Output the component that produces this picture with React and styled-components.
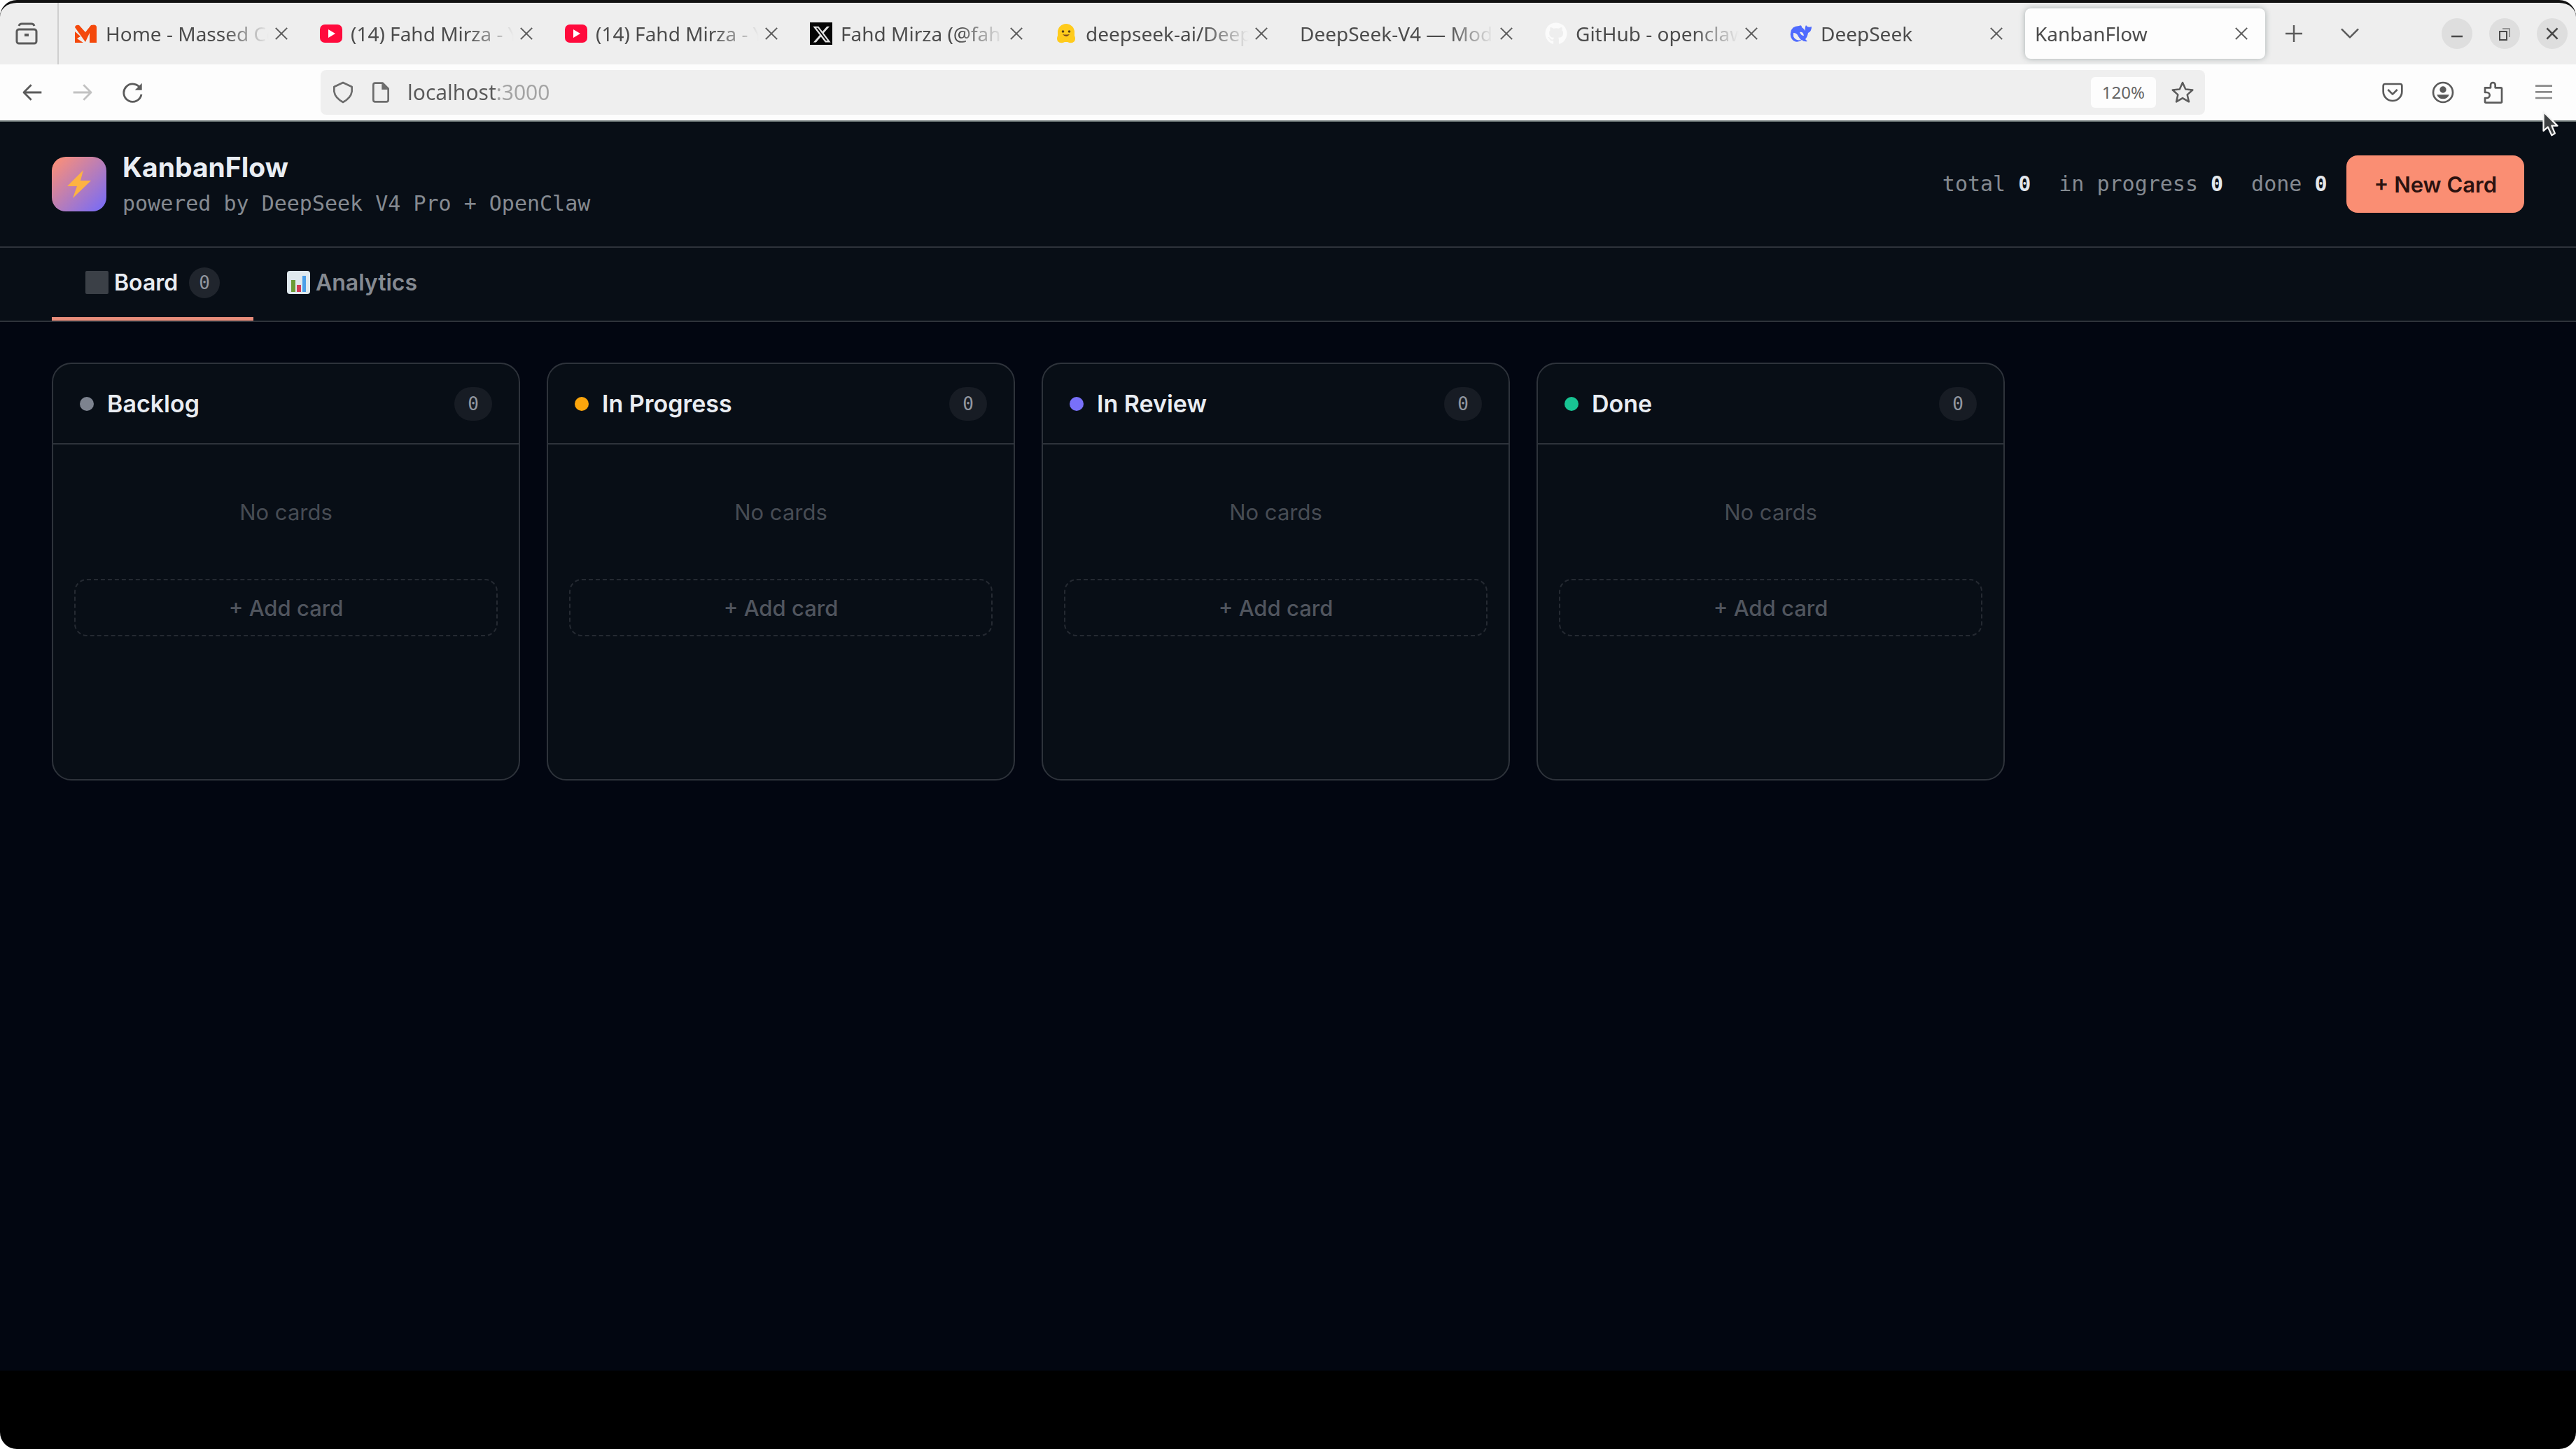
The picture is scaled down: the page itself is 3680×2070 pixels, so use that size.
import React from "react";
import styled, { createGlobalStyle } from "styled-components";
import { FaGithub, FaXTwitter } from "react-icons/fa6";

const sans = `Inter, "Noto Sans", sans-serif`;
const mono = `"DejaVu Sans Mono", "Liberation Mono", monospace`;
const chromeFont = `"Noto Sans", "Open Sans", sans-serif`;

const GlobalStyle = createGlobalStyle`
  *, *::before, *::after { box-sizing: border-box; }
  html, body { margin: 0; background: #ffffff; }
  button, input { font: inherit; color: inherit; margin: 0; padding: 0; border: 0; background: none; }
  h1, h2, p, ul { margin: 0; padding: 0; font-weight: inherit; font-size: inherit; }
  svg { display: block; flex: none; }
`;

const Window = styled.div`
  display: flex;
  flex-direction: column;
  min-height: 100vh;
  overflow: hidden;
  border-top: 4px solid #111111;
  border-radius: 24px;
  background: #000000;
  position: relative;
`;

/* ---------- browser chrome ---------- */

const TabStrip = styled.div`
  display: flex;
  align-items: center;
  height: 88px;
  padding-right: 12px;
  background: #eeeeee;
  color: #4c4c4c;
  font: 400 28px/40px ${chromeFont};
`;

const SidebarSlot = styled.div`
  display: flex;
  align-items: center;
  align-self: stretch;
  padding: 0 27px 0 21px;
  margin-right: 9px;
  border-right: 2px solid #cfcfcf;
`;

const TabList = styled.div`
  display: flex;
  flex: 0 1 3143px;
  min-width: 0;
  gap: 7px;
  margin-right: 5px;
`;

const BrowserTab = styled.div`
  display: flex;
  align-items: center;
  flex: 1 1 0;
  min-width: 0;
  height: 72px;
  padding: 0 16px 0 14px;
  border-radius: 8px;
  background: ${(p) => (p.$active ? "#fdfdfd" : "transparent")};
  box-shadow: ${(p) => (p.$active ? "0 0 8px rgba(60, 80, 80, 0.4)" : "none")};
`;

const TabTitle = styled.button`
  display: flex;
  align-items: center;
  gap: 12px;
  flex: 1;
  min-width: 0;
  text-align: left;
`;

const TabText = styled.span`
  flex: 1;
  min-width: 0;
  overflow: hidden;
  white-space: nowrap;
  mask-image: linear-gradient(to left, transparent 0, #000 64px);
`;

const IconButton = styled.button`
  display: flex;
  align-items: center;
  justify-content: center;
  width: ${(p) => p.$w || 72}px;
  height: 64px;
  color: ${(p) => p.$color || "#5b5b5b"};
`;

const StripActions = styled.div`
  display: flex;
  gap: 8px;
`;

const WindowControls = styled.div`
  display: flex;
  gap: 24px;
  margin-left: auto;
`;

const RoundButton = styled.button`
  display: flex;
  align-items: center;
  justify-content: center;
  width: 44px;
  height: 44px;
  border-radius: 50%;
  background: #dedede;
  color: #4a4a4a;
`;

const Toolbar = styled.div`
  display: flex;
  align-items: center;
  height: 82px;
  padding: 0 10px;
  background: #fdfdfd;
  border-bottom: 2px solid #667070;
`;

const AddressBar = styled.div`
  display: flex;
  align-items: center;
  flex: 1;
  min-width: 0;
  height: 64px;
  margin: 0 232px;
  padding: 0 16px;
  gap: 22px;
  border-radius: 8px;
  background: #efefef;
  color: #6c6c6c;
`;

const AddressInput = styled.input`
  flex: 1;
  min-width: 0;
  height: 44px;
  font: 400 30px/44px ${chromeFont};
  color: #5a5a5a;
  background: linear-gradient(90deg, #5a5a5a 126px, #a4a4a4 126px);
  background-clip: text;
  -webkit-background-clip: text;
  -webkit-text-fill-color: transparent;
  outline: none;
`;

const ZoomButton = styled.button`
  height: 44px;
  padding: 0 16px;
  border-radius: 6px;
  background: #fdfdfd;
  color: #666666;
  font: 400 24px/44px ${chromeFont};
`;

/* ---------- page ---------- */

const Page = styled.main`
  display: flex;
  flex-direction: column;
  flex: 1;
  background: #020611;
  font-family: ${sans};
`;

const PageHeader = styled.header`
  display: flex;
  align-items: center;
  justify-content: space-between;
  padding: 37px 74px;
  border-bottom: 2px solid #2e333b;
  background: #080e16;
`;

const Brand = styled.div`
  display: flex;
  align-items: center;
  gap: 23px;
`;

const Logo = styled.div`
  display: flex;
  align-items: center;
  justify-content: center;
  width: 78px;
  height: 78px;
  border-radius: 20px;
  background: linear-gradient(135deg, #fb8f78 5%, #796cf5 95%);
`;

const Title = styled.h1`
  font-size: 39px;
  font-weight: 700;
  line-height: 56px;
  color: #e9edf3;
`;

const Subtitle = styled.p`
  font: 400 30px/48px ${mono};
  color: #858a91;
`;

const HeaderSide = styled.div`
  display: flex;
  align-items: center;
  gap: 28px;
`;

const Stats = styled.div`
  display: flex;
  gap: 40px;
  font: 400 30px/48px ${mono};
  color: #858a91;

  strong {
    color: #e3e7ec;
    font-weight: 700;
  }
`;

const PrimaryButton = styled.button`
  height: 82px;
  padding: 0 39px;
  border-radius: 16px;
  background: #fa8e73;
  color: #2b1210;
  font-size: 31px;
  font-weight: 600;
`;

const Views = styled.nav`
  display: flex;
  padding: 0 74px;
  border-bottom: 2px solid #2e333b;
  background: #080e16;
`;

const ViewTab = styled.button`
  display: flex;
  align-items: center;
  height: 104px;
  padding: 0 48px;
  gap: 8px;
  border-bottom: 5px solid ${(p) => (p.$active ? "#e88d7b" : "transparent")};
  color: ${(p) => (p.$active ? "#e9edf3" : "#858a91")};
  font-size: 32px;
  font-weight: 600;
`;

const Count = styled.span`
  padding: 0 ${(p) => (p.$wide ? 19 : 14)}px;
  margin-left: 8px;
  border-radius: 24px;
  background: ${(p) => (p.$wide ? "#171c24" : "#20252d")};
  color: #9297a0;
  font: 400 26px/${(p) => (p.$wide ? 48 : 44)}px ${mono};
`;

const Board = styled.section`
  display: flex;
  align-items: flex-start;
  flex: 1;
  gap: 38px;
  padding: 58px 74px;
`;

const Column = styled.article`
  flex: 0 1 669px;
  min-width: 0;
  min-height: 597px;
  border: 2px solid #2e333b;
  border-radius: 28px;
  background: #080e16;
`;

const ColumnHeader = styled.header`
  display: flex;
  align-items: center;
  height: 115px;
  padding: 0 38px;
  gap: 19px;
  border-bottom: 2px solid #2e333b;
`;

const Dot = styled.span`
  width: 20px;
  height: 20px;
  border-radius: 50%;
  background: ${(p) => p.$color};
`;

const ColumnTitle = styled.h2`
  flex: 1;
  font-size: 34px;
  font-weight: 600;
  line-height: 48px;
  color: #e9edf3;
`;

const ColumnBody = styled.div`
  display: flex;
  flex-direction: column;
  gap: 28px;
  padding: 30px;
`;

const Empty = styled.p`
  padding: 46px 0;
  font-size: 31px;
  line-height: 42px;
  text-align: center;
  color: #474c54;
`;

const AddButton = styled.button`
  height: 82px;
  border: 2px dashed #252a32;
  border-radius: 18px;
  color: #50555e;
  font-size: 31px;
  font-weight: 500;
`;

const BottomStrip = styled.div`
  height: 112px;
`;

const Pointer = styled.svg`
  position: absolute;
  top: 152px;
  right: 22px;
`;

/* ---------- drawings ---------- */

const Line = ({ size = 32, w = 2, children, ...rest }) => (
  <svg width={size} height={size} viewBox="0 0 24 24" fill="none" stroke="currentColor" strokeWidth={w} strokeLinejoin="round" aria-hidden="true" {...rest}>
    {children}
  </svg>
);

const Massed = () => (
  <svg width="32" height="26" viewBox="0 0 32 26" aria-hidden="true">
    <path fill="#f4480b" d="M0 4 Q1 0 6 1 L15 11 L23 1 Q31 -1 31 4 V26 H21 V12 L15 25 Z M0 10 L8 17 L3 20 L12 26 H0 Z" />
  </svg>
);

const YouTube = () => (
  <svg width="32" height="26" viewBox="0 0 32 26" aria-hidden="true">
    <rect width="32" height="26" rx="7" fill="#ff0a3c" />
    <path d="M12 7 L22 13 L12 19 Z" fill="#fff" />
  </svg>
);

const XMark = () => (
  <svg width="32" height="32" viewBox="0 0 32 32" aria-hidden="true">
    <rect width="32" height="32" fill="#050505" />
    <FaXTwitter x="3" y="3" width="26" height="26" color="#e2e2e2" />
  </svg>
);

const Hugging = () => (
  <svg width="32" height="28" viewBox="0 0 32 28" aria-hidden="true">
    <path d="M4 25 Q2 21 4 17 V12 A12 12 0 0 1 28 12 V17 Q30 21 28 25 Q24 29 18 26 H14 Q8 29 4 25 Z" fill="#ffcb1c" />
    <circle cx="11.500" cy="11" r="1.800" fill="#564018" />
    <circle cx="20.500" cy="11" r="1.800" fill="#564018" />
    <path d="M11 15 Q16 21 21 15 Q16 16 11 15 Z" fill="#7a4a1c" />
  </svg>
);

const Whale = () => (
  <svg width="32" height="26" viewBox="0 0 32 26" aria-hidden="true">
    <path d="M1 12 Q2 2 13 2 Q17 0 17 4 Q20 6 22 9 Q21 4 23 1 Q25 5 31 3 Q31 10 26 12 Q25 18 22 21 L25 24 Q20 25 17 22 Q9 28 3 21 Q0 17 1 12 Z" fill="#4f6bfe" />
    <path d="M5 12 Q10 12 12 17 Q14 20 16 22 Q8 24 5 17 Z M14 11 Q19 10 20 16 Q16 16 14 11 Z" fill="#eeeeee" />
  </svg>
);

const CloseIcon = ({ size = 28 }) => (
  <Line size={size} w={1.7}><path d="M5 5 L19 19 M19 5 L5 19" /></Line>
);

const Bolt = () => (
  <svg width="36" height="42" viewBox="0 0 36 42" aria-hidden="true">
    <path d="M24 1 L1 24 H15 L9 41 L35 16 H20 Z" fill="#fdb343" />
  </svg>
);

const BoardIcon = () => (
  <svg width="33" height="33" viewBox="0 0 33 33" aria-hidden="true">
    <rect width="33" height="33" rx="2" fill="#3b4047" />
  </svg>
);

const ChartIcon = () => (
  <svg width="33" height="33" viewBox="0 0 33 33" aria-hidden="true">
    <rect width="33" height="33" rx="4" fill="#dfe9ee" />
    <rect x="6" y="13" width="6" height="17" fill="#6c9b35" />
    <rect x="14" y="20" width="6" height="10" fill="#d23b56" />
    <rect x="22" y="7" width="5" height="23" fill="#4b9fe8" />
  </svg>
);

const browserTabs = [
  { title: "Home - Massed Co", icon: <Massed /> },
  { title: "(14) Fahd Mirza - Y", icon: <YouTube /> },
  { title: "(14) Fahd Mirza - Y", icon: <YouTube /> },
  { title: "Fahd Mirza (@fah", icon: <XMark /> },
  { title: "deepseek-ai/Deep", icon: <Hugging /> },
  { title: "DeepSeek-V4 — Mod" },
  { title: "GitHub - openclaw", icon: <FaGithub size={32} color="#fbfbfb" /> },
  { title: "DeepSeek", icon: <Whale /> },
  { title: "KanbanFlow", active: true },
];

const stats = [["total", 0], ["in progress", 0], ["done", 0]];

const columns = [
  { name: "Backlog", color: "#7d838f" },
  { name: "In Progress", color: "#fba50c" },
  { name: "In Review", color: "#7870fa" },
  { name: "Done", color: "#18c493" },
];

function BrowserChrome() {
  return (
    <>
      <TabStrip>
        <SidebarSlot>
          <IconButton $w={34} aria-label="Recent browsing">
            <svg width="34" height="34" viewBox="0 0 34 34" fill="none" stroke="currentColor" strokeWidth="3" aria-hidden="true">
              <rect x="3" y="11" width="28" height="20" rx="3" />
              <path d="M6 6 Q7 3 10 3 H24 Q27 3 28 6" />
              <path d="M14 19 H20" strokeWidth="4" />
            </svg>
          </IconButton>
        </SidebarSlot>
        <TabList>
          {browserTabs.map((tab, i) => (
            <BrowserTab key={i} $active={tab.active}>
              <TabTitle>
                {tab.icon}
                <TabText>{tab.title}</TabText>
              </TabTitle>
              <IconButton $w={36} aria-label="Close tab"><CloseIcon /></IconButton>
            </BrowserTab>
          ))}
        </TabList>
        <StripActions>
          <IconButton aria-label="New tab"><Line w={1.8}><path d="M12 3 V21 M3 12 H21" /></Line></IconButton>
          <IconButton aria-label="List all tabs"><Line w={1.9}><path d="M3 7 L12 16 L21 7" /></Line></IconButton>
        </StripActions>
        <WindowControls>
          <RoundButton aria-label="Minimize"><Line size={24} w={2.5}><path d="M4 16 H20" /></Line></RoundButton>
          <RoundButton aria-label="Restore">
            <Line size={24} w={2}><path d="M5 9 H15 V21 H5 Z" strokeLinejoin="miter" /><path d="M9 5 H19 V17" opacity="0.5" /></Line>
          </RoundButton>
          <RoundButton aria-label="Close window"><Line size={26} w={2.4}><path d="M5 5 L19 19 M19 5 L5 19" /></Line></RoundButton>
        </WindowControls>
      </TabStrip>
      <Toolbar>
        <IconButton aria-label="Back"><Line w={2.1}><path d="M22 12 H3 M11 4 L3 12 L11 20" /></Line></IconButton>
        <IconButton aria-label="Forward" $color="#c2c2c2"><Line w={2.1}><path d="M2 12 H21 M13 4 L21 12 L13 20" /></Line></IconButton>
        <IconButton aria-label="Reload">
          <Line w={2.1}><path d="M20 8 A9.500 9.500 0 1 0 21 14" /><path d="M21.500 2 V9.500 H14 Z" fill="currentColor" stroke="none" /></Line>
        </IconButton>
        <AddressBar>
          <Line w={2}><path d="M12 1.500 L21.500 6 V11 Q20.500 18 12 22.500 Q3.500 18 2.500 11 V6 Z" /></Line>
          <Line w={2}><path d="M14 2 H6 Q4 2 4 4 V20 Q4 22 6 22 H18 Q20 22 20 20 V8 Z" /><path d="M13 2 L20 9 H13 Z" fill="currentColor" stroke="none" /></Line>
          <AddressInput type="text" aria-label="Address" defaultValue="localhost:3000" />
          <ZoomButton>120%</ZoomButton>
          <IconButton $w={32} aria-label="Bookmark">
            <Line w={1.9}><path d="M12 1.500 L15.200 8.600 L22.700 9.400 L17 14.500 L18.700 22 L12 18.100 L5.300 22 L7 14.500 L1.300 9.400 L8.800 8.600 Z" /></Line>
          </IconButton>
        </AddressBar>
        <IconButton aria-label="Save to Pocket"><Line w={2}><path d="M4 3 H20 Q22 3 22 5 V11 A10 10 0 0 1 2 11 V5 Q2 3 4 3 Z M7 9 L12 14 L17 9" /></Line></IconButton>
        <IconButton aria-label="Account">
          <Line w={2}><circle cx="12" cy="12" r="10.500" /><circle cx="12" cy="9" r="3.500" fill="currentColor" stroke="none" /><path d="M5.500 14.500 H18.500 Q17 19 12 19 Q7 19 5.500 14.500 Z" fill="currentColor" stroke="none" /></Line>
        </IconButton>
        <IconButton aria-label="Extensions">
          <Line w={2}><path d="M3 7 H9 V4 A2.500 2.500 0 0 1 14 4 V7 H20 Q21 7 21 8 V22 Q21 23 20 23 H4 Q3 23 3 22 V18 H5 A2.500 2.500 0 0 0 5 12 H3 Z" /></Line>
        </IconButton>
        <IconButton aria-label="Menu" $color="#8a8a8a"><Line w={2}><path d="M3 5 H21 M3 11.500 H21 M3 18 H21" /></Line></IconButton>
      </Toolbar>
    </>
  );
}

function KanbanColumn({ name, color }) {
  return (
    <Column>
      <ColumnHeader>
        <Dot $color={color} />
        <ColumnTitle>{name}</ColumnTitle>
        <Count $wide>0</Count>
      </ColumnHeader>
      <ColumnBody>
        <Empty>No cards</Empty>
        <AddButton>+ Add card</AddButton>
      </ColumnBody>
    </Column>
  );
}

export default function App() {
  return (
    <>
      <GlobalStyle />
      <Window>
        <BrowserChrome />
        <Page>
          <PageHeader>
            <Brand>
              <Logo><Bolt /></Logo>
              <div>
                <Title>KanbanFlow</Title>
                <Subtitle>powered by DeepSeek V4 Pro + OpenClaw</Subtitle>
              </div>
            </Brand>
            <HeaderSide>
              <Stats>
                {stats.map(([label, value]) => (
                  <span key={label}>{label} <strong>{value}</strong></span>
                ))}
              </Stats>
              <PrimaryButton>+ New Card</PrimaryButton>
            </HeaderSide>
          </PageHeader>
          <Views>
            <ViewTab $active><BoardIcon />Board<Count>0</Count></ViewTab>
            <ViewTab><ChartIcon />Analytics</ViewTab>
          </Views>
          <Board>
            {columns.map((c) => <KanbanColumn key={c.name} {...c} />)}
          </Board>
        </Page>
        <BottomStrip />
        <Pointer width="29" height="40" viewBox="0 0 32 44" aria-hidden="true">
          <path d="M5 4 V34 L12 28 L18 41 L23 38 L18 26 H27 Z" fill="#3d4042" stroke="#f4f4f4" strokeWidth="2.500" strokeLinejoin="round" />
        </Pointer>
      </Window>
    </>
  );
}
